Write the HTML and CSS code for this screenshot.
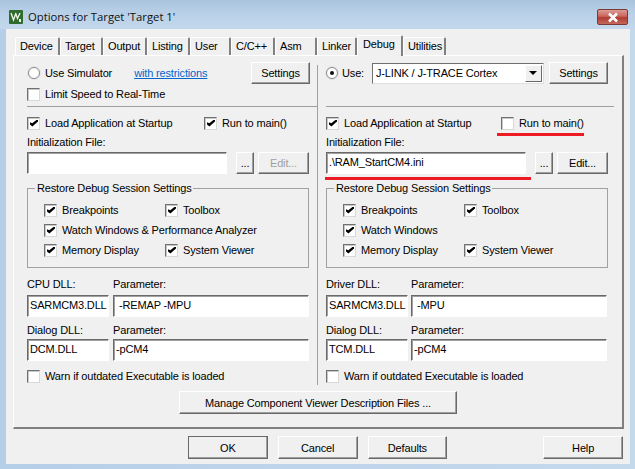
FILE: index.html
```html
<!DOCTYPE html>
<html lang="en">
<head>
  <meta charset="UTF-8">
  <title>Options for Target 'Target 1'</title>
  <link rel="stylesheet" href="styles.css">
</head>
<body>

  <div class="window">
    <!-- Title bar -->
    <div class="titlebar">
      <svg class="app-icon" width="14" height="14" viewBox="0 0 14 14">
        <rect width="14" height="14" rx="1" fill="#2f6b2f"/>
        <path d="M2 3l2.5 7L7 3M6.5 3l2 5.5L11 3" fill="none" stroke="#e8f2e0" stroke-width="1.4"/>
        <rect x="10" y="9" width="2" height="3" fill="#e8f2e0"/>
      </svg>
      <span class="title">Options for Target 'Target 1'</span>
      <div class="close-btn">
        <svg width="14" height="11" viewBox="0 0 14 11">
          <path d="M3 1.5l8 8M11 1.5l-8 8" stroke="#fff" stroke-width="2.6" fill="none"/>
        </svg>
      </div>
    </div>

    <div class="client">
      <!-- Tabs -->
      <div class="tabs">
        <div class="tab w-device">Device</div>
        <div class="tab w-target">Target</div>
        <div class="tab w-output">Output</div>
        <div class="tab w-listing">Listing</div>
        <div class="tab w-user">User</div>
        <div class="tab w-cc">C/C++</div>
        <div class="tab w-asm">Asm</div>
        <div class="tab w-linker">Linker</div>
        <div class="tab active w-debug">Debug</div>
        <div class="tab w-util">Utilities</div>
      </div>

      <div class="panel">
        <div class="columns">
          <!-- Simulator side -->
          <div class="col col-left">
            <div class="top-block">
              <div class="row top-row">
                <span class="radio"></span>
                <span class="label">Use Simulator</span>
                <a class="link">with restrictions</a>
                <button class="btn settings">Settings</button>
              </div>
              <div class="row limit-row">
                <span class="check"></span>
                <span class="label">Limit Speed to Real-Time</span>
              </div>
            </div>
            <div class="row load-row">
              <span class="check on"></span>
              <span class="label load-label">Load Application at Startup</span>
              <span class="check on"></span>
              <span class="label">Run to main()</span>
            </div>
            <div class="field-label">Initialization File:</div>
            <div class="row file-row">
              <div class="input file-input"></div>
              <button class="btn dots">...</button>
              <button class="btn edit" disabled>Edit...</button>
            </div>
            <fieldset class="group">
              <legend>Restore Debug Session Settings</legend>
              <div class="group-grid">
                <div class="row"><span class="check on"></span><span class="label">Breakpoints</span></div>
                <div class="row"><span class="check on"></span><span class="label">Toolbox</span></div>
                <div class="row wide"><span class="check on"></span><span class="label">Watch Windows &amp; Performance Analyzer</span></div>
                <div class="row"><span class="check on"></span><span class="label">Memory Display</span></div>
                <div class="row"><span class="check on"></span><span class="label">System Viewer</span></div>
              </div>
            </fieldset>
            <div class="dll-grid first">
              <div class="field-label">CPU DLL:</div>
              <div class="field-label">Parameter:</div>
              <div class="input">SARMCM3.DLL</div>
              <div class="input param">-REMAP -MPU</div>
            </div>
            <div class="dll-grid second">
              <div class="field-label">Dialog DLL:</div>
              <div class="field-label">Parameter:</div>
              <div class="input">DCM.DLL</div>
              <div class="input">-pCM4</div>
            </div>
            <div class="row warn-row">
              <span class="check"></span>
              <span class="label">Warn if outdated Executable is loaded</span>
            </div>
          </div>

          <!-- Target driver side -->
          <div class="col col-right">
            <div class="top-block">
              <div class="row top-row">
                <span class="radio on"></span>
                <span class="label use-label">Use:</span>
                <div class="select">
                  <span class="select-text">J-LINK / J-TRACE Cortex</span>
                  <span class="select-arrow"></span>
                </div>
                <button class="btn settings">Settings</button>
              </div>
            </div>
            <div class="row load-row">
              <span class="check on"></span>
              <span class="label load-label">Load Application at Startup</span>
              <span class="check"></span>
              <span class="label">Run to main()</span>
            </div>
            <div class="field-label">Initialization File:</div>
            <div class="row file-row">
              <div class="input file-input">.\RAM_StartCM4.ini</div>
              <button class="btn dots">...</button>
              <button class="btn edit">Edit...</button>
            </div>
            <fieldset class="group">
              <legend>Restore Debug Session Settings</legend>
              <div class="group-grid">
                <div class="row"><span class="check on"></span><span class="label">Breakpoints</span></div>
                <div class="row"><span class="check on"></span><span class="label">Toolbox</span></div>
                <div class="row wide"><span class="check on"></span><span class="label">Watch Windows</span></div>
                <div class="row"><span class="check on"></span><span class="label">Memory Display</span></div>
                <div class="row"><span class="check on"></span><span class="label">System Viewer</span></div>
              </div>
            </fieldset>
            <div class="dll-grid first">
              <div class="field-label">Driver DLL:</div>
              <div class="field-label">Parameter:</div>
              <div class="input">SARMCM3.DLL</div>
              <div class="input param">-MPU</div>
            </div>
            <div class="dll-grid second">
              <div class="field-label">Dialog DLL:</div>
              <div class="field-label">Parameter:</div>
              <div class="input">TCM.DLL</div>
              <div class="input">-pCM4</div>
            </div>
            <div class="row warn-row">
              <span class="check"></span>
              <span class="label">Warn if outdated Executable is loaded</span>
            </div>
          </div>
        </div>
        <button class="btn manage">Manage Component Viewer Description Files ...</button>
      </div>

      <!-- Bottom buttons -->
      <div class="footer">
        <button class="btn dlg default">OK</button>
        <button class="btn dlg">Cancel</button>
        <button class="btn dlg">Defaults</button>
        <button class="btn dlg help">Help</button>
      </div>

      <!-- Red marks drawn over the screenshot -->
      <div class="mark mark-run"></div>
      <div class="mark mark-file"></div>
    </div>
  </div>

</body>
</html>
```

FILE: styles.css
```css
* {
  box-sizing: border-box;
}

html, body {
  margin: 0;
  padding: 0;
}

body {
  width: 635px;
  height: 469px;
  overflow: hidden;
  font-family: "Liberation Sans", Arial, sans-serif;
  font-size: 11px;
  letter-spacing: -0.15px;
  color: #000;
  background-color: #b9d1ea;
}

.window {
  height: 469px;
  padding: 0 5px 5px 6px;
  background: linear-gradient(to right, #b6cfe8 0%, #bed4ea 50%, #c5d9ed 100%);
}

.titlebar {
  height: 29px;
  margin: 0 -5px 0 -6px;
  padding: 10px 7px 0 9px;
  display: flex;
  align-items: flex-start;
  background: linear-gradient(to bottom, #a9c3dd 0%, #b7cfe6 40%, #c3d8ec 100%);
}

.app-icon {
  flex: none;
}

.title {
  margin-left: 5px;
  margin-top: -1px;
  font-family: "Open Sans", sans-serif;
  font-size: 11.3px;
  letter-spacing: 0;
  line-height: 16px;
  color: #111;
}

.close-btn {
  margin-left: auto;
  margin-top: -1px;
  width: 31px;
  height: 16px;
  display: flex;
  align-items: center;
  justify-content: center;
  border: 1px solid #7c3a36;
  border-radius: 2px;
  background: linear-gradient(to bottom, #dc9c94 0%, #c9665d 45%, #b03c33 55%, #c4685e 100%);
}

.client {
  position: relative;
  height: 435px;
  padding: 7px 7px 0 7px;
  background-color: #f0f0f0;
}

.tabs {
  display: flex;
  height: 19px;
  align-items: flex-end;
  padding-left: 2px;
}

.tab {
  height: 18px;
  padding: 1px 0 0 4px;
  line-height: 15px;
  background-color: #f0f0f0;
  border: 1px solid #fff;
  border-bottom: none;
  border-right: 2px solid #808080;
  border-radius: 2px 2px 0 0;
}

.tab.active {
  height: 21px;
  margin-bottom: -1px;
  position: relative;
  z-index: 1;
  padding-top: 1px;
  padding-left: 5px;
}

.w-device { width: 45px; }
.w-target { width: 43px; }
.w-output { width: 44px; }
.w-listing { width: 43px; }
.w-user { width: 41px; }
.w-cc { width: 44px; }
.w-asm { width: 42px; }
.w-linker { width: 40px; }
.w-debug { width: 46px; }
.w-util { width: 43px; }

.panel {
  height: 374px;
  width: 611px;
  border-top: 1px solid #fff;
  border-left: 1px solid #fff;
  border-right: 2px solid #808080;
  border-bottom: 2px solid #808080;
}

.columns {
  display: flex;
  height: 335px;
}

.col {
  height: 323px;
  margin-top: 6px;
}

/* divider starts a little below the top of the column */
.col-left {
  width: 304px;
  padding-left: 13px;
  background: linear-gradient(#a0a0a0, #a0a0a0) right 0 top 3px / 1px 100% no-repeat;
}

.col-right {
  width: 303px;
  padding-left: 8px;
}

.row {
  display: flex;
  align-items: center;
}

.top-block {
  height: 45px;
  border-bottom: 1px solid #a0a0a0;
}

.col-right .top-block {
  margin-right: 7px;
}

.top-row {
  height: 22px;
}

.col-left .top-row {
  padding-left: 1px;
}

.limit-row {
  height: 20px;
}

.radio {
  flex: none;
  width: 12px;
  height: 12px;
  border-radius: 50%;
  background: #fff;
  border: 1px solid #8a8a8a;
  box-shadow: 0 0 0 1px #e4e4e4;
  position: relative;
}

.radio.on::after {
  content: "";
  position: absolute;
  left: 3px;
  top: 3px;
  width: 4px;
  height: 4px;
  border-radius: 50%;
  background: #111;
}

.check {
  flex: none;
  width: 13px;
  height: 13px;
  background: #fff;
  border: 1px solid #707070;
  border-right-color: #d8d8d8;
  border-bottom-color: #d8d8d8;
  box-shadow: inset 1px 1px 0 #c8c8c8;
  position: relative;
}

.check.on::after {
  content: "";
  position: absolute;
  left: 2px;
  top: 2px;
  width: 8px;
  height: 7px;
  background: #000;
  clip-path: polygon(0 40%, 28% 55%, 88% 0, 100% 0, 100% 30%, 30% 100%, 0 70%);
}

.label {
  margin-left: 5px;
  white-space: nowrap;
}

.link {
  margin-left: 22px;
  color: #0066cc;
  text-decoration: underline;
}

.btn {
  padding: 0;
  font-family: inherit;
  font-size: 11px;
  letter-spacing: inherit;
  color: #000;
  background-color: #f0f0f0;
  border: 1px solid;
  border-color: #fff #696969 #696969 #fff;
  box-shadow: inset -1px -1px 0 #a0a0a0;
}

.btn:disabled {
  color: #a0a0a0;
}

.settings {
  height: 22px;
  width: 59px;
  margin-left: auto;
  margin-right: 8px;
}

.use-label {
  margin-left: 4px;
  width: 21px;
}

.select {
  width: 172px;
  height: 21px;
  margin-left: 9px;
  margin-right: 5px;
  display: flex;
  align-items: center;
  background: #fff;
  border: 1px solid #707070;
  border-right-color: #e0e0e0;
  border-bottom-color: #e0e0e0;
}

.select-text {
  flex: 1;
  padding-left: 3px;
}

.select-arrow {
  width: 17px;
  height: 17px;
  margin-right: 1px;
  background-color: #f0f0f0;
  border: 1px solid;
  border-color: #fff #696969 #696969 #fff;
  position: relative;
}

.select-arrow::after {
  content: "";
  position: absolute;
  left: 3px;
  top: 5px;
  border: 4px solid transparent;
  border-top: 4px solid #000;
  border-bottom: none;
}

.col-right .settings {
  margin-left: 0;
  margin-right: 0;
}

.load-row {
  height: 16px;
  margin-top: 8px;
}

.load-label {
  width: 159px;
}

.col-right .load-label {
  width: 157px;
}

.field-label {
  height: 14px;
  line-height: 14px;
  margin-top: 4px;
}

.file-row {
  height: 22px;
  margin-top: 3px;
}

.input {
  height: 22px;
  line-height: 19px;
  padding-left: 2px;
  background: #fff;
  border: 1px solid #fff;
  border-top: 1px solid #696969;
  border-left: 1px solid #696969;
  box-shadow: inset 1px 1px 0 #a0a0a0;
  white-space: nowrap;
  overflow: hidden;
}

.input.param {
  padding-left: 5px;
}

.file-input {
  width: 200px;
}

.dots {
  width: 18px;
  height: 22px;
  margin-left: 9px;
}

.edit {
  width: 51px;
  height: 22px;
  margin-left: 4px;
}

.group {
  width: 282px;
  height: 87px;
  margin: 7px 0 0 0;
  padding: 0;
  border: 1px solid #a0a0a0;
}

.group legend {
  margin-left: 7px;
  padding: 0 2px;
  line-height: 14px;
}

.group-grid {
  display: grid;
  grid-template-columns: 121px 1fr;
  grid-auto-rows: 20px;
  padding: 5px 0 0 16px;
}

.wide {
  grid-column: 1 / 3;
}

.dll-grid {
  display: grid;
  grid-template-columns: 82px 196px;
  column-gap: 4px;
  width: 282px;
}

.col-right .dll-grid {
  column-gap: 3px;
}

.dll-grid.first {
  margin-top: 5px;
}

.dll-grid.first .input {
  margin-top: 4px;
}

.dll-grid.second {
  margin-top: 2px;
}

.dll-grid.second .input {
  margin-top: 2px;
}

.warn-row {
  height: 16px;
  margin-top: 7px;
}

.manage {
  display: block;
  width: 278px;
  height: 23px;
  margin: 0 0 0 165px;
}

.footer {
  display: flex;
  margin-top: 7px;
  padding-left: 175px;
}

.dlg {
  width: 80px;
  height: 23px;
  margin-right: 10px;
}

.dlg.default {
  outline: 1px solid #696969;
  outline-offset: -1px;
}

.help {
  margin-left: 86px;
  margin-right: 0;
}

.mark {
  position: absolute;
  height: 3px;
  background-color: #ed1c24;
}

.mark-run {
  left: 491px;
  top: 104px;
  width: 87px;
}

.mark-file {
  left: 319px;
  top: 148px;
  width: 206px;
}
```
